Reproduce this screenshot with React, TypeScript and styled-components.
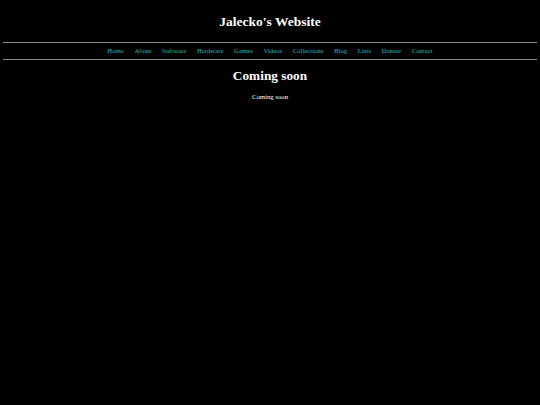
import React from "react";
import styled, { createGlobalStyle } from "styled-components";

const GlobalStyle = createGlobalStyle`
  html, body {
    background: #000000;
  }
  body {
    margin: 3.4px;
    color: #ffffff;
    font-family: "Liberation Serif", "Times New Roman", serif;
  }
`;

const Title = styled.h1`
  font-size: 13.5px;
  font-weight: bold;
  text-align: center;
  margin: 11px 0 12px;
`;

const Rule = styled.hr`
  margin: 0;
  border: none;
  border-top: 1px solid #8a8a8a;
  height: 0;
`;

const Nav = styled.nav`
  display: flex;
  justify-content: center;
  gap: 10.6px;
  padding: 4px 0 5px;
  font-size: 6.75px;
`;

const NavLink = styled.a`
  color: #24bcbc;
  text-decoration: none;
`;

const Heading = styled.h2`
  font-size: 13.3px;
  font-weight: bold;
  text-align: center;
  margin: 8px 0 9px;
`;

const Text = styled.p`
  font-size: 6.75px;
  text-align: center;
  margin: 0;
`;

const links = [
  "Home",
  "About",
  "Software",
  "Hardware",
  "Games",
  "Videos",
  "Collections",
  "Blog",
  "Lists",
  "Donate",
  "Contact",
];

const App = () => (
  <>
    <GlobalStyle />
    <Title>Jalecko's Website</Title>
    <Rule />
    <Nav>
      {links.map((name) => (
        <NavLink key={name} href="#">
          {name}
        </NavLink>
      ))}
    </Nav>
    <Rule />
    <Heading>Coming soon</Heading>
    <Text>Coming soon</Text>
  </>
);

export default App;
